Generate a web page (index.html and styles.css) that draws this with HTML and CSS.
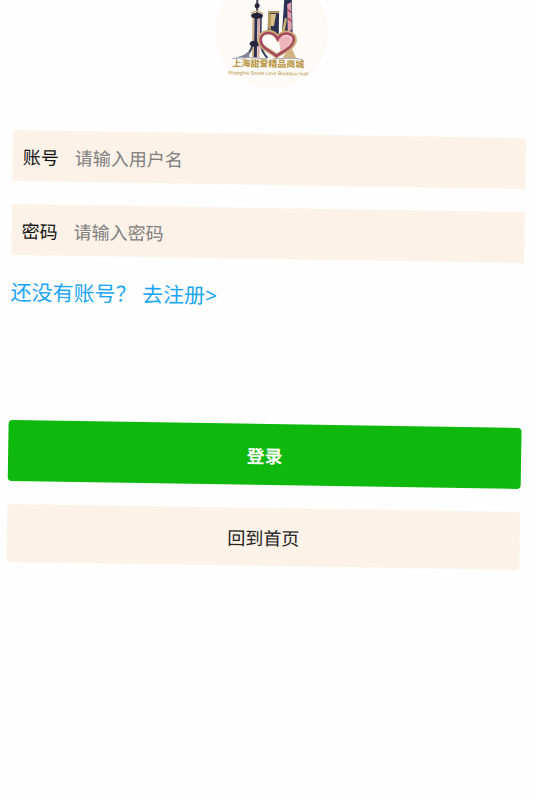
FILE: index.html
```html
<!DOCTYPE html>
<html lang="zh-CN">
<head>
    <meta charset="UTF-8">
    <meta name="viewport" content="width=device-width, initial-scale=1.0">
    <title>登录</title>
    <link rel="stylesheet" href="styles.css">
</head>
<body>
    <div class="page">
        <svg class="logo" viewBox="0 0 114 114" role="img" aria-label="上海甜爱精品商城">
            <circle cx="57" cy="57" r="57" fill="#fcfbf8"/>
            <!-- pearl tower -->
            <path d="M42 12V42" stroke="#4a4050" stroke-width="2"/>
            <path d="M38.5 42V83" stroke="#d0b186" stroke-width="2"/>
            <path d="M41 42V83" stroke="#2c3050" stroke-width="3"/>
            <path d="M44 42V83" stroke="#d9a5a5" stroke-width="2"/>
            <path d="M46 42V72" stroke="#2c3050" stroke-width="1.5"/>
            <path d="M38 70Q36 79 29 83M46 70Q48 78 53 83" fill="none" stroke="#3b415f" stroke-width="2"/>
            <path d="M21 83Q30 81 35 76V83Z" fill="#7d8295"/>
            <circle cx="42" cy="31" r="2.5" fill="#24243a"/>
            <ellipse cx="42" cy="41" rx="6" ry="3" fill="#24243a"/>
            <path d="M36 39Q42 34 48 39" fill="none" stroke="#d0b186" stroke-width="1.5"/>
            <ellipse cx="40" cy="69" rx="5" ry="3" fill="#24243a"/>
            <!-- bottle opener tower -->
            <path d="M53 36H64V62H53Z" fill="#2b3152"/>
            <path d="M53 36H64V38H53Z" fill="#b89b60"/>
            <path d="M55 39H61L59 51H55Z" fill="#d8c08b"/>
            <path d="M53 36V52L56 58V40Z" fill="#b89b60"/>
            <!-- twisted tower -->
            <path d="M69 24L71 12H76L78 62H67Z" fill="#2b3152"/>
            <path d="M72 29L76 27L77 54L73 58Z" fill="#e0a0b0"/>
            <path d="M72 34L76 37M73 43L77 46" stroke="#a83b55" stroke-width="1.5"/>
            <path d="M70 42L66 62H69L72 44Z" fill="#c9ad73"/>
            <path d="M76 70L82 83H68Z" fill="#d4b583"/>
            <!-- heart -->
            <path d="M62 81C55 75 45 73 45 65C45 56 58 54 63 63C68 54 81 57 80 65C79 73 68 76 62 81Z" fill="#fcfbf8" stroke="#cbab76" stroke-width="4.5"/>
            <path d="M64 64Q72 57 77 63Q79 69 66 76Z" fill="#efb5bd"/>
            <path d="M62 81C55 75 46 73 46 65C46 57 58 55 63 64C68 55 80 58 79 65C78 73 68 76 62 81Z" fill="none" stroke="#a84760" stroke-width="2.5"/>
            <path d="M18 84Q35 82 52 84M58 84Q76 82 88 84" fill="none" stroke="#a9a5ae" stroke-width="1"/>
            <text class="logo-name" x="54" y="92" text-anchor="middle">上海甜爱精品商城</text>
            <text class="logo-sub" x="54" y="100" text-anchor="middle">Shanghai Sweet Love Boutique mall</text>
        </svg>

        <form class="login-form">
            <div class="field">
                <label for="username">账号</label>
                <input type="text" id="username" placeholder="请输入用户名">
            </div>
            <div class="field">
                <label for="password">密码</label>
                <input type="password" id="password" placeholder="请输入密码">
            </div>
            <a class="register" href="#">还没有账号？ 去注册&gt;</a>
            <button type="submit" class="btn btn-login">登录</button>
            <button type="button" class="btn btn-home">回到首页</button>
        </form>
    </div>
</body>
</html>
```

FILE: styles.css
```css
* {
    box-sizing: border-box;
}
html {
    overflow: hidden;
    background-color: #fefefe;
}
body {
    margin: 0;
    font-family: "Noto Sans CJK SC", sans-serif;
    font-size: 18px;
    color: #222;
}
/* the whole screen is slightly tilted */
.page {
    display: flex;
    flex-direction: column;
    min-height: 100vh;
    padding: 0 14px 0 9px;
    transform: rotate(0.9deg);
}
.logo {
    width: 114px;
    height: 114px;
    margin: -25px auto 45px;
    flex-shrink: 0;
}
.logo-name {
    font-size: 9px;
    font-weight: bold;
    fill: #b8933c;
}
.logo-sub {
    font-family: "Liberation Sans", sans-serif;
    font-size: 5px;
    fill: #b8933c;
}
.login-form {
    display: flex;
    flex-direction: column;
}
.field {
    display: flex;
    align-items: center;
    gap: 16px;
    height: 51px;
    margin-bottom: 23px;
    padding: 0 10px;
    background-color: #fdf2e8;
}
.field label {
    color: #111;
}
.field input {
    flex: 1;
    min-width: 0;
    padding: 0;
    border: none;
    outline: none;
    background: transparent;
    font: inherit;
}
.field input::placeholder {
    color: #808080;
}
.register {
    align-self: flex-start;
    margin-bottom: 114px;
    font-family: "Noto Sans", "Noto Sans CJK SC", sans-serif;
    font-size: 21px;
    line-height: 28px;
    color: #1aa5f5;
    text-decoration: none;
}
.btn {
    border: none;
    border-radius: 4px;
    font: inherit;
    cursor: pointer;
}
.btn-login {
    height: 61px;
    margin-bottom: 23px;
    background-color: #0eb80c;
    color: #fff;
    font-weight: bold;
}
.btn-home {
    height: 58px;
    background-color: #fdf2e8;
    color: #222;
}
```
